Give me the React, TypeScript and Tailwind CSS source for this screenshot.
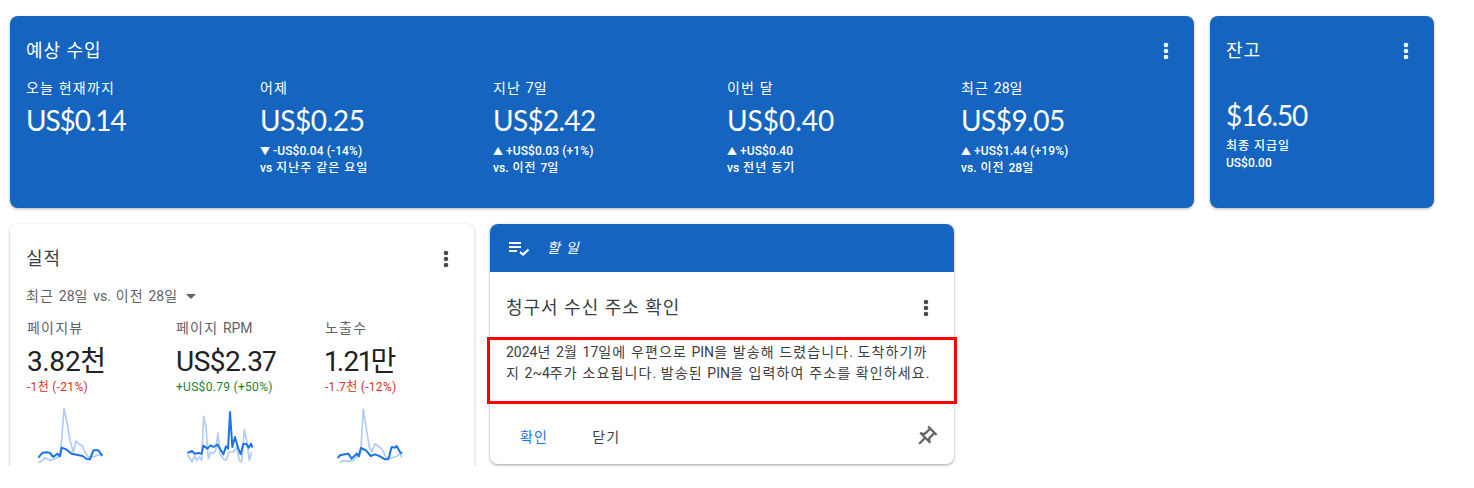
const KR = "font-['Roboto','Noto_Sans_CJK_KR',sans-serif]"
const BIG = "font-['Lato','Noto_Sans_CJK_KR',sans-serif]"

// hangul in the screenshot runs wider than Noto, so space out only those runs
const Ko = ({ text, tr }: { text: string; tr: string }) => (
  <>
    {text.split(/([가-힣 ]+)/).map((part, i) => (
      <span key={i} className={/[가-힣]/.test(part) ? tr : undefined}>
        {part}
      </span>
    ))}
  </>
)

const T18 = 'tracking-[0.055em]'
const T14 = 'tracking-[0.085em]'
const T13 = 'tracking-[0.08em]'
const T12 = 'tracking-[0.083em]'

const Dots = ({ light }: { light?: boolean }) => (
  <svg width="6" height="18" viewBox="0 0 6 18" className={light ? 'fill-white' : 'fill-[#4a4a4a]'}>
    <circle cx="3" cy="3" r="2.3" />
    <circle cx="3" cy="9" r="2.3" />
    <circle cx="3" cy="15" r="2.3" />
  </svg>
)

const earnings = [
  { label: '오늘 현재까지', value: 'US$0.14', track: 'tracking-[-1.1px]' },
  { label: '어제', value: 'US$0.25', track: 'tracking-[-0.4px]', arrow: '▼', delta: '-US$0.04 (-14%)', note: 'vs 지난주 같은 요일' },
  { label: '지난 7일', value: 'US$2.42', track: 'tracking-[-0.7px]', arrow: '▲', delta: '+US$0.03 (+1%)', note: 'vs. 이전 7일' },
  { label: '이번 달', value: 'US$0.40', track: 'tracking-[0px]', arrow: '▲', delta: '+US$0.40', note: 'vs 전년 동기' },
  { label: '최근 28일', value: 'US$9.05', track: 'tracking-[-0.5px]', arrow: '▲', delta: '+US$1.44 (+19%)', note: 'vs. 이전 28일' },
]

const metrics = [
  {
    label: '페이지뷰',
    value: '3.82천',
    delta: '-1천 (-21%)',
    color: 'text-[#d93025]',
    box: '48 24 210 174',
    dark: '55,182 68,167 80,166 90,168 100,180 112,170 120,178 125,152 140,158 155,170 170,173 188,177 200,186 210,187 220,160 235,160 247,176',
    pale: '55,197 68,190 75,182 90,190 105,186 118,178 125,130 132,35 140,70 150,130 160,165 168,132 178,143 186,145 195,165 205,180 225,178 240,172 247,178',
  },
  {
    label: '페이지 RPM',
    value: 'US$2.37',
    delta: '+US$0.79 (+50%)',
    color: 'text-[#188038]',
    box: '495 24 210 174',
    dark: '502,167 510,165 516,162 524,170 535,168 545,170 550,146 562,155 572,145 580,150 592,143 600,155 610,172 618,148 624,155 630,45 637,150 645,120 655,155 662,172 670,140 680,142 686,152 693,140 697,152',
    pale: '502,172 516,195 524,175 530,190 538,180 545,190 551,58 558,90 565,185 572,165 580,170 587,160 594,108 600,170 610,185 618,190 628,165 640,165 650,150 658,190 665,195 673,98 680,130 688,190 695,165',
  },
  {
    label: '노출수',
    value: '1.21만',
    delta: '-1.7천 (-12%)',
    color: 'text-[#d93025]',
    box: '222 24 210 174',
    dark: '233,183 240,175 255,172 265,170 275,185 290,170 297,178 303,153 318,160 332,177 345,172 360,178 375,187 385,187 395,150 405,152 410,147 420,165 426,170',
    pale: '240,197 250,190 265,193 280,190 295,172 303,150 310,37 318,90 328,150 336,165 345,140 358,150 365,155 378,180 395,183 410,178 420,170 426,182',
  },
]

export default function App() {
  return (
    <div className={`relative h-[488px] overflow-hidden bg-white px-[10px] pt-4 ${KR}`}>
      <div className="flex gap-4">
        <section className="h-[192px] w-[1184px] rounded-lg bg-[#1565c0] px-[16px] pt-[23px] text-white shadow-[0_1px_3px_rgba(60,64,67,0.4)]">
          <div className="flex items-center justify-between pr-[9px]">
            <h2 className="text-[18px] leading-[24px]"><Ko text="예상 수입" tr={T18} /></h2>
            <Dots light />
          </div>
          <div className="mt-[15px] grid grid-cols-[234px_233px_234px_234px_1fr]">
            {earnings.map(e => (
              <div key={e.label}>
                <div className="text-[14px] leading-[20px]"><Ko text={e.label} tr={T14} /></div>
                <div className={`mt-[4px] text-[28px] leading-[36px] ${BIG} ${e.track}`}>{e.value}</div>
                {e.delta && (
                  <div className="mt-[5px] text-[12px] font-medium leading-[16px]">
                    <div className="flex items-baseline tracking-[0.1px]">
                      <span className="w-[13px] text-[10px]">{e.arrow}</span>
                      <span>{e.delta}</span>
                    </div>
                    <div><Ko text={e.note} tr={T12} /></div>
                  </div>
                )}
              </div>
            ))}
          </div>
        </section>

        <section className="h-[192px] w-[224px] rounded-lg bg-[#1565c0] px-[16px] pt-[23px] text-white shadow-[0_1px_3px_rgba(60,64,67,0.4)]">
          <div className="flex items-center justify-between pr-[9px]">
            <h2 className="text-[18px] leading-[24px]"><Ko text="잔고" tr={T18} /></h2>
            <Dots light />
          </div>
          <div className={`mt-[34px] text-[28px] leading-[36px] tracking-[-1.1px] ${BIG}`}>$16.50</div>
          <div className="mt-[5px] text-[12px] font-medium leading-[17px]">
            <div><Ko text="최종 지급일" tr={T12} /></div>
            <div>US$0.00</div>
          </div>
        </section>
      </div>

      <div className="mt-4 flex items-start gap-4">
        <section className="h-[242px] w-[464px] overflow-hidden rounded-t-lg bg-white px-[16px] pt-[23px] shadow-[0_1px_3px_rgba(60,64,67,0.4)] [clip-path:inset(-4px_-4px_0_-4px)]">
          <div className="flex items-center justify-between pr-[9px]">
            <h2 className="text-[18px] leading-[24px] text-[#3c4043]"><Ko text="실적" tr={T18} /></h2>
            <Dots />
          </div>
          <div className="mt-[15px] flex items-center gap-[8px] text-[14px] leading-[20px] text-[#5f6368]">
            <span><Ko text="최근 28일 vs. 이전 28일" tr={T14} /></span>
            <span className="h-0 w-0 border-x-[5px] border-t-[5px] border-x-transparent border-t-[#5f6368]" />
          </div>
          <div className="mt-[12px] grid grid-cols-[149px_149px_1fr]">
            {metrics.map(m => (
              <div key={m.label} className="pl-[1px]">
                <div className="text-[14px] leading-[20px] text-[#5f6368]"><Ko text={m.label} tr={T14} /></div>
                <div className="proportional-nums mt-[7px] text-[28px] leading-[34px] tracking-[-0.5px] text-[#202124]">{m.value}</div>
                <div className={`text-[12px] leading-[16px] tracking-[0.3px] ${m.color}`}>{m.delta}</div>
                <svg viewBox={m.box} className="ml-[9px] mt-[10px] h-[58px] w-[70px]" fill="none" strokeLinejoin="round">
                  <polyline points={m.pale} stroke="#aecbfa" strokeWidth="5" />
                  <polyline points={m.dark} stroke="#1a73e8" strokeWidth="6" />
                </svg>
              </div>
            ))}
          </div>
        </section>

        <section className="h-[240px] w-[464px] overflow-hidden rounded-lg bg-white shadow-[0_1px_3px_rgba(60,64,67,0.5)]">
          <header className="flex h-[48px] items-center gap-[17px] bg-[#1565c0] pl-[16px] text-white">
            <svg width="24" height="24" viewBox="0 0 24 24" fill="currentColor">
              <path d="M3 6h12v2H3zM3 10h12v2H3zM3 14h8v2H3z" />
              <polyline points="14,16 17,18.6 22.5,13.5" fill="none" stroke="currentColor" strokeWidth="2.2" />
            </svg>
            <span className="text-[14px] italic"><Ko text="할 일" tr={T14} /></span>
          </header>
          <div className="flex items-center justify-between pl-[16px] pr-[25px] pt-[23px]">
            <h3 className="text-[18px] leading-[26px] text-[#3c4043]"><Ko text="청구서 수신 주소 확인" tr={T18} /></h3>
            <Dots />
          </div>
          <p className="mt-[21px] whitespace-nowrap pl-[16px] text-[14px] leading-[21px] text-[#3c4043]">
            <span className="block"><Ko text="2024년 2월 17일에 우편으로 PIN을 발송해 드렸습니다. 도착하기까" tr={T13} /></span>
            <span className="block"><Ko text="지 2~4주가 소요됩니다. 발송된 PIN을 입력하여 주소를 확인하세요." tr={T13} /></span>
          </p>
          <div className="mt-[41px] flex items-center pl-[30px] pr-[16px] text-[14px] leading-[20px]">
            <span className="text-[#1a73e8]"><Ko text="확인" tr={T14} /></span>
            <span className="ml-[44px] text-[#3c4043]"><Ko text="닫기" tr={T14} /></span>
            <svg width="24" height="24" viewBox="0 0 24 24" fill="#5f6368" stroke="#5f6368" strokeWidth="0.4" className="ml-auto rotate-45">
              <path d="M14 4v5c0 1.12.37 2.16 1 3H9c.65-.86 1-1.9 1-3V4h4m3-2H7c-.55 0-1 .45-1 1s.45 1 1 1h1v5c0 1.66-1.34 3-3 3v2h5.97v7l1 1 1-1v-7H19v-2c-1.66 0-3-1.34-3-3V4h1c.55 0 1-.45 1-1s-.45-1-1-1z" />
            </svg>
          </div>
        </section>
      </div>

      <div className="absolute left-[487px] top-[337px] h-[67px] w-[470px] border-[3px] border-[#ff0000]" />
    </div>
  )
}
